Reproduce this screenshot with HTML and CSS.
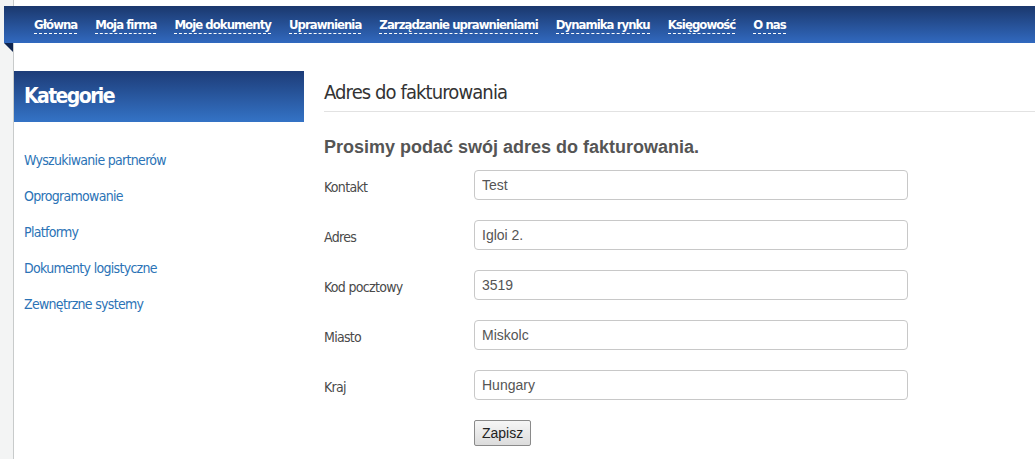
FILE: index.html
```html
<!DOCTYPE html>
<html lang="pl">
<head>
  <meta charset="UTF-8">
  <title>Adres do fakturowania</title>
  <link rel="stylesheet" href="styles.css">
</head>
<body>
  <div class="page">
    <nav class="topnav">
      <a href="#">Główna</a>
      <a href="#">Moja firma</a>
      <a href="#">Moje dokumenty</a>
      <a href="#">Uprawnienia</a>
      <a href="#">Zarządzanie uprawnieniami</a>
      <a href="#">Dynamika rynku</a>
      <a href="#">Księgowość</a>
      <a href="#">O nas</a>
    </nav>

    <div class="columns">
      <div class="sidebar">
        <h2 class="side-head">Kategorie</h2>
        <ul class="side-links">
          <li><a href="#">Wyszukiwanie partnerów</a></li>
          <li><a href="#">Oprogramowanie</a></li>
          <li><a href="#">Platformy</a></li>
          <li><a href="#">Dokumenty logistyczne</a></li>
          <li><a href="#">Zewnętrzne systemy</a></li>
        </ul>
      </div>

      <div class="main">
        <h1>Adres do fakturowania</h1>
        <h3>Prosimy podać swój adres do fakturowania.</h3>
        <form class="billing">
          <div class="row">
            <label>Kontakt</label>
            <input type="text" value="Test">
          </div>
          <div class="row">
            <label>Adres</label>
            <input type="text" value="Igloi 2.">
          </div>
          <div class="row">
            <label>Kod pocztowy</label>
            <input type="text" value="3519">
          </div>
          <div class="row">
            <label>Miasto</label>
            <input type="text" value="Miskolc">
          </div>
          <div class="row">
            <label>Kraj</label>
            <input type="text" value="Hungary">
          </div>
          <div class="row buttons">
            <button type="button">Zapisz</button>
          </div>
        </form>
      </div>
    </div>
  </div>
</body>
</html>
```

FILE: styles.css
```css
    body {
      margin: 0;
      background-color: #f3f4f4;
      font-family: "Liberation Sans Narrow", "DejaVu Sans Condensed", "Liberation Sans", sans-serif;
      overflow: hidden;
    }
    .page {
      margin-left: 13px;
      border-left: 1px solid #c8cbcb;
      background: #fff;
      min-height: 100vh;
      padding-top: 6px;
    }
    /* top ribbon, sticks out to the left */
    .topnav {
      position: relative;
      margin-left: -10px;
      height: 37px;
      padding-left: 30px;
      display: flex;
      align-items: center;
      gap: 18px;
      background: linear-gradient(#1b386d, #3169bf);
    }
    .topnav::after {
      content: "";
      position: absolute;
      left: 0;
      top: 37px;
      border-top: 9px solid #0f2550;
      border-left: 9px solid transparent;
    }
    .topnav a {
      color: #fff;
      font-weight: bold;
      font-size: 13px;
      letter-spacing: -0.95px;
      text-decoration: none;
      border-bottom: 1px dashed #fff;
      line-height: 16px;
      margin-top: 2px;
    }
    .columns {
      display: flex;
      margin-top: 28px;
    }
    .sidebar {
      width: 290px;
      flex: none;
    }
    .side-head {
      margin: 0;
      height: 51px;
      line-height: 51px;
      padding-left: 10px;
      color: #fff;
      font-size: 21px;
      letter-spacing: -1.6px;
      font-weight: bold;
      background: linear-gradient(#1d3c78, #3473c6);
    }
    .side-links {
      list-style: none;
      margin: 20px 0 0;
      padding: 0 0 0 10px;
    }
    .side-links li {
      line-height: 36px;
    }
    .side-links a {
      color: #2b73b6;
      font-size: 14px;
      letter-spacing: -0.7px;
      text-decoration: none;
    }
    .main {
      flex: 1;
      margin-left: 20px;
    }
    .main h1 {
      margin: 0;
      font-size: 20px;
      letter-spacing: -0.9px;
      font-weight: normal;
      color: #333;
      padding: 9px 0 7px;
      border-bottom: 1px solid #e2e2e2;
    }
    .main h3 {
      margin: 25px 0 12px;
      font-family: "Liberation Sans", Arial, sans-serif;
      font-size: 18px;
      color: #555;
    }
    .row {
      display: flex;
      align-items: center;
      height: 30px;
      margin-bottom: 20px;
    }
    .row label {
      width: 150px;
      color: #4a4a4a;
      font-size: 14px;
      letter-spacing: -0.7px;
      padding-top: 4px;
    }
    .row input {
      box-sizing: border-box;
      width: 434px;
      height: 30px;
      border: 1px solid #c8c8c8;
      border-radius: 4px;
      padding: 0 7px;
      font-family: "Liberation Sans", Arial, sans-serif;
      font-size: 14px;
      color: #555;
    }
    .buttons {
      align-items: flex-start;
      padding-left: 150px;
    }
    .buttons button {
      height: 26px;
      padding: 0 7px;
      font-family: "Liberation Sans", Arial, sans-serif;
      font-size: 14px;
      color: #222;
      border: 1px solid #8a8a8a;
      border-radius: 2px;
      background: linear-gradient(#f6f6f6, #dcdcdc);
    }
```
